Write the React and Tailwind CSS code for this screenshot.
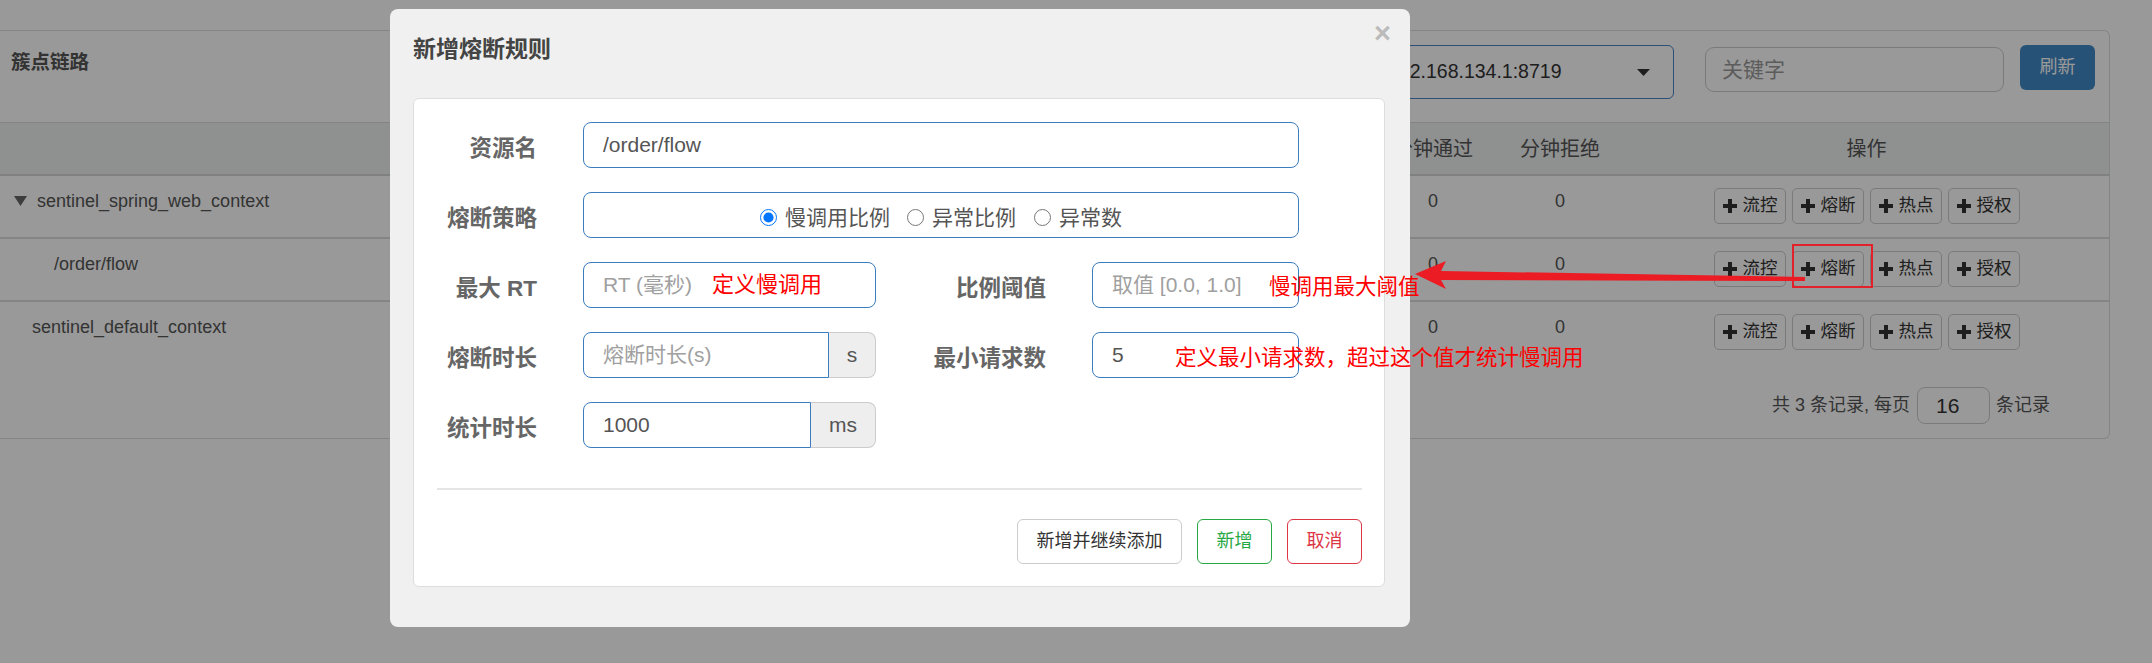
const tableCols = 'grid grid-cols-[1370px_126px_128px_1fr]';

function PlusIcon() {
  return (
    <svg width="14" height="14" viewBox="0 0 14 14" className="shrink-0">
      <path d="M5 0h4v5h5v4H9v5H5V9H0V5h5z" fill="#333" />
    </svg>
  );
}

function Actions() {
  return (
    <div className="flex justify-center gap-[6px]">
      {['流控', '熔断', '热点', '授权'].map((t) => (
        <button
          key={t}
          className="flex h-[36px] w-[72px] items-center gap-[6px] rounded-[5px] border border-[#cccccc] bg-white pl-[8px] text-[17.5px] leading-none text-[#333]"
        >
          <PlusIcon />
          {t}
        </button>
      ))}
    </div>
  );
}

const rows = [
  { name: 'sentinel_spring_web_context', pad: 'pl-[14px]', tree: true },
  { name: '/order/flow', pad: 'pl-[54px]' },
  { name: 'sentinel_default_context', pad: 'pl-[32px]', last: true },
];

function Page() {
  return (
    <div className="w-[2110px] pt-[30px]">
      <div className="rounded-r-[6px] border border-l-0 border-[#dddddd] bg-white">
        {/* panel heading */}
        <div className="flex h-[92px] items-start border-b border-[#dddddd] pl-[11px] pr-[14px]">
          <h3 className="mt-[16px] text-[19.5px] font-bold leading-[30px] text-[#555]">簇点链路</h3>
          <div className="ml-auto flex items-start">
            <div className="mt-[14px] flex h-[54px] w-[306px] items-center justify-between rounded-[6px] border border-[#4a85c4] pl-[19px] pr-[23px]">
              <span className="text-[19.5px] text-[#333]">192.168.134.1:8719</span>
              <svg width="13" height="7" viewBox="0 0 13 7">
                <polygon points="0,0 13,0 6.5,7" fill="#333" />
              </svg>
            </div>
            <div className="ml-[31px] mt-[16px] flex h-[45px] w-[299px] items-center rounded-[9px] border border-[#cccccc] pl-[16px] text-[21px] text-[#999]">
              关键字
            </div>
            <button className="ml-[16px] mt-[14px] h-[45px] w-[75px] rounded-[6px] bg-[#4289c6] text-[18px] text-white">
              刷新
            </button>
          </div>
        </div>

        {/* table head */}
        <div className={`${tableCols} h-[53px] items-center border-b-2 border-[#d5d5d5] bg-[#eff0f1] text-[20px] text-[#555]`}>
          <div />
          <div className="text-center">分钟通过</div>
          <div className="text-center">分钟拒绝</div>
          <div className="text-center">操作</div>
        </div>

        {/* table rows */}
        {rows.map((r) => (
          <div
            key={r.name}
            className={`${tableCols} h-[63px] items-start pt-[12px] text-[18px] leading-[26px] text-[#555] ${r.last ? '' : 'border-b-2 border-[#dddddd]'}`}
          >
            <div className={`flex items-center gap-[10px] ${r.pad}`}>
              {r.tree && (
                <svg width="13" height="10" viewBox="0 0 13 10">
                  <polygon points="0,0 13,0 6.5,10" fill="#666" />
                </svg>
              )}
              <span>{r.name}</span>
            </div>
            <div className="text-center">0</div>
            <div className="text-center">0</div>
            <Actions />
          </div>
        ))}

        {/* pagination */}
        <div className="flex h-[73px] items-start justify-end pr-[59px] pt-[22px]">
          <div className="flex items-center text-[18px] text-[#555]">
            <span>共 3 条记录, 每页</span>
            <div className="ml-[7px] mr-[6px] flex h-[37px] w-[73px] items-center rounded-[8px] border border-[#cccccc] pl-[18px] text-[21px] text-[#333]">
              16
            </div>
            <span>条记录</span>
          </div>
        </div>
      </div>
    </div>
  );
}

const inputCls =
  'h-[46px] rounded-[8px] border border-[#3b7cbf] bg-white px-[19px] text-[21px] text-[#555] outline-none placeholder:text-[#a0a0a0]';
const labelCls = 'pt-[8px] text-right text-[22.5px] font-bold leading-[30px] text-[#666]';

function Modal() {
  return (
    <div className="absolute left-[390px] top-[9px] flex h-[618px] w-[1020px] flex-col rounded-[8px] bg-[#f0f0f0] pl-[23px] pr-[25px]">
      <div className="flex h-[89px] items-start justify-between">
        <h4 className="mt-[25px] text-[23px] font-bold leading-[30px] text-[#444]">新增熔断规则</h4>
        <span className="-mr-[6px] mt-[8px] text-[29px] font-bold leading-[32px] text-[#bbbbbb]">×</span>
      </div>

      <div className="rounded-[6px] border border-[#dddddd] bg-white pb-[22px] pl-[23px] pr-[22px] pt-[23px]">
        <div className="flex flex-col gap-[24px]">
          <div className="flex h-[46px] items-center">
            <label className={`w-[100px] ${labelCls}`}>资源名</label>
            <input className={`ml-[46px] w-[716px] ${inputCls}`} defaultValue="/order/flow" readOnly />
          </div>

          <div className="flex h-[46px] items-center">
            <label className={`w-[100px] ${labelCls}`}>熔断策略</label>
            <div className="ml-[46px] flex h-[46px] w-[716px] items-center justify-center rounded-[8px] border border-[#3b7cbf] pt-[5px] text-[21px] text-[#555]">
              <label className="flex items-center gap-[8px]">
                <input type="radio" name="grade" defaultChecked className="m-0 h-[17px] w-[17px] accent-[#0075ff]" />
                慢调用比例
              </label>
              <label className="ml-[17px] flex items-center gap-[8px]">
                <input type="radio" name="grade" className="m-0 h-[17px] w-[17px] accent-[#0075ff]" />
                异常比例
              </label>
              <label className="ml-[18px] flex items-center gap-[8px]">
                <input type="radio" name="grade" className="m-0 h-[17px] w-[17px] accent-[#0075ff]" />
                异常数
              </label>
            </div>
          </div>

          <div className="flex h-[46px] items-center">
            <label className={`w-[100px] ${labelCls}`}>最大 RT</label>
            <input className={`ml-[46px] w-[293px] ${inputCls}`} placeholder="RT (毫秒)" />
            <label className={`w-[170px] ${labelCls}`}>比例阈值</label>
            <input className={`ml-[46px] w-[207px] ${inputCls}`} placeholder="取值 [0.0, 1.0]" />
          </div>

          <div className="flex h-[46px] items-center">
            <label className={`w-[100px] ${labelCls}`}>熔断时长</label>
            <div className="ml-[46px] flex h-[46px] w-[293px]">
              <input className={`min-w-0 flex-1 rounded-r-none ${inputCls}`} placeholder="熔断时长(s)" />
              <span className="flex w-[47px] items-center justify-center rounded-r-[8px] border border-l-0 border-[#cccccc] bg-[#eeeeee] text-[21px] text-[#555]">
                s
              </span>
            </div>
            <label className={`w-[170px] ${labelCls}`}>最小请求数</label>
            <input className={`ml-[46px] w-[207px] ${inputCls}`} defaultValue="5" readOnly />
          </div>

          <div className="flex h-[46px] items-center">
            <label className={`w-[100px] ${labelCls}`}>统计时长</label>
            <div className="ml-[46px] flex h-[46px] w-[293px]">
              <input className={`min-w-0 flex-1 rounded-r-none ${inputCls}`} defaultValue="1000" readOnly />
              <span className="flex w-[65px] items-center justify-center rounded-r-[8px] border border-l-0 border-[#cccccc] bg-[#eeeeee] text-[21px] text-[#555]">
                ms
              </span>
            </div>
          </div>
        </div>

        <div className="mt-[40px] h-[2px] bg-[#e5e5e5]" />

        <div className="mt-[29px] flex justify-end gap-[15px]">
          <button className="h-[45px] w-[165px] rounded-[6px] border border-[#cccccc] bg-white text-[18px] text-[#333]">
            新增并继续添加
          </button>
          <button className="h-[45px] w-[75px] rounded-[6px] border border-[#28a745] bg-white text-[18px] text-[#28a745]">
            新增
          </button>
          <button className="h-[45px] w-[75px] rounded-[6px] border border-[#dc3545] bg-white text-[18px] text-[#dc3545]">
            取消
          </button>
        </div>
      </div>
    </div>
  );
}

function Annotations() {
  return (
    <div className="pointer-events-none absolute inset-0">
      <span className="absolute left-[712px] top-[272px] text-[22px] leading-[26px] text-[#ff0000]">定义慢调用</span>
      <span className="absolute left-[1269px] top-[274px] text-[21.5px] leading-[26px] text-[#ff0000]">慢调用最大阈值</span>
      <span className="absolute left-[1175px] top-[345px] text-[21.5px] leading-[26px] text-[#ff0000]">
        定义最小请求数，超过这个值才统计慢调用
      </span>
      <div className="absolute left-[1792px] top-[244px] h-[44px] w-[81px] border-2 border-[#e3212b]" />
      <svg className="absolute left-0 top-0" width="2152" height="663">
        <polygon
          points="1415,274 1446,261 1441,271 1805,277 1805,281 1441,280 1446,289"
          fill="#ec1c24"
        />
      </svg>
    </div>
  );
}

export default function App() {
  return (
    <div className="relative h-[663px] w-full overflow-hidden bg-white font-['Liberation_Sans','Noto_Sans_CJK_SC',sans-serif]">
      <Page />
      <div className="absolute inset-0 bg-black/40" />
      <Modal />
      <Annotations />
    </div>
  );
}
